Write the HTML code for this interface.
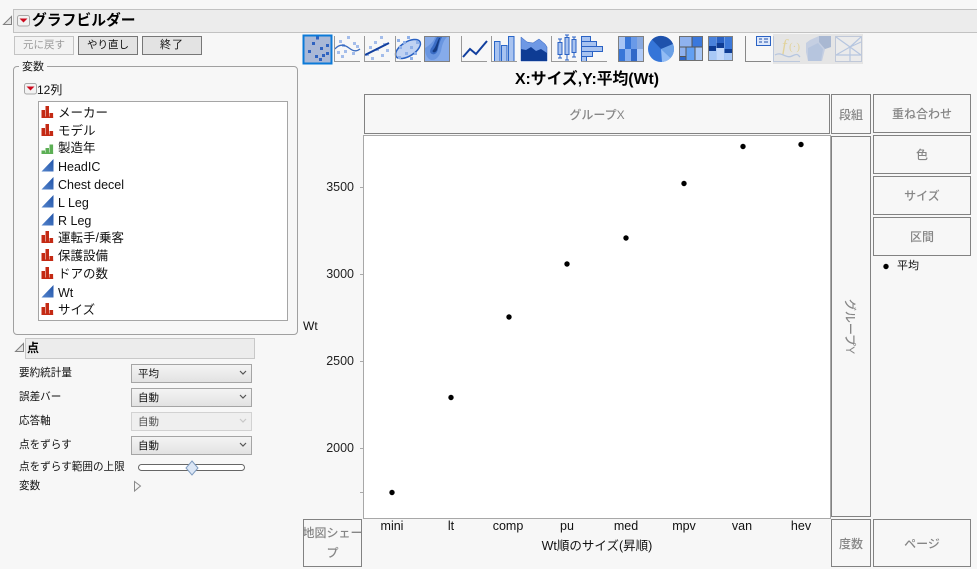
<!DOCTYPE html>
<html lang="ja"><head><meta charset="utf-8"><title>グラフビルダー</title>
<style>
html,body{margin:0;padding:0;background:#f7f7f7;}
body{width:977px;height:569px;overflow:hidden;position:relative;font-family:"Liberation Sans","Noto Sans CJK JP",sans-serif;font-size:12px;color:#111;}
div{box-sizing:border-box;}
.a{position:absolute;white-space:nowrap;}
.z{position:absolute;box-sizing:border-box;border:1px solid #828282;background:#f7f7f7;color:#868686;font-weight:500;display:flex;align-items:center;justify-content:center;text-align:center;font-size:12px;}
.b{position:absolute;box-sizing:border-box;height:19px;top:36px;width:60px;background:#e3e3e3;border:1px solid #777;text-align:center;line-height:17px;font-size:10.5px;}
.row{position:absolute;left:58px;font-size:12.5px;line-height:16px;}
.l{margin-top:1px;}
.dd{position:absolute;left:131px;width:121px;height:19px;box-sizing:border-box;border:1px solid #a5a5a5;background:linear-gradient(#f4f4f4,#e2e2e2);padding-left:6px;font-size:10.5px;line-height:18px;}
.lb{position:absolute;left:19px;font-size:10.600px;line-height:14px;margin-top:1px;}
.t{position:absolute;width:50px;text-align:right;font-size:12.5px;line-height:14px;color:#222;}
.x{position:absolute;top:519px;width:60px;text-align:center;font-size:12.5px;line-height:15px;}
svg{position:absolute;left:0;top:0;}
</style></head><body>

<div class="a" style="left:13px;top:9px;width:964px;height:24px;background:#ececec;border:1px solid #c2c2c2;border-right:none;"></div>
<div class="a" style="left:32px;top:11px;font-size:14.8px;font-weight:bold;line-height:20px;color:#000;">グラフビルダー</div>

<div class="b" style="left:14px;border-color:#c4c4c4;background:#f3f3f3;color:#9a9a9a;">元に戻す</div>
<div class="b" style="left:78px;">やり直し</div>
<div class="b" style="left:142px;font-size:11px;letter-spacing:1px;">終了</div>

<div class="a" style="left:13px;top:66px;width:285px;height:269px;border:1px solid #a0a0a0;border-radius:4px;"></div>
<div class="a" style="left:19px;top:59px;padding:0 3px;background:#f7f7f7;font-size:11px;line-height:16px;">変数</div>
<div class="a" style="left:37px;top:83px;font-size:12px;line-height:15px;">12列</div>

<div class="a" style="left:38px;top:101px;width:250px;height:220px;background:#fff;border:1px solid #a5a5a5;"></div>
<div class="row" style="top:105px;">メーカー</div>
<div class="row" style="top:123px;">モデル</div>
<div class="row" style="top:140px;">製造年</div>
<div class="row l" style="top:158px;">HeadIC</div>
<div class="row l" style="top:176px;">Chest decel</div>
<div class="row l" style="top:194px;">L Leg</div>
<div class="row l" style="top:212px;">R Leg</div>
<div class="row" style="top:230px;">運転手/乗客</div>
<div class="row" style="top:248px;">保護設備</div>
<div class="row" style="top:266px;">ドアの数</div>
<div class="row l" style="top:284px;">Wt</div>
<div class="row" style="top:302px;">サイズ</div>

<div class="a" style="left:25px;top:338px;width:230px;height:21px;background:#ececec;border:1px solid #c8c8c8;"></div>
<div class="a" style="left:27px;top:341px;font-size:12px;font-weight:bold;line-height:15px;color:#000;">点</div>

<div class="lb" style="top:365px;">要約統計量</div>
<div class="lb" style="top:389px;">誤差バー</div>
<div class="lb" style="top:413px;">応答軸</div>
<div class="lb" style="top:437px;">点をずらす</div>
<div class="lb" style="top:459px;">点をずらす範囲の上限</div>
<div class="lb" style="top:478px;">変数</div>
<div class="dd" style="top:364px;">平均</div>
<div class="dd" style="top:388px;">自動</div>
<div class="dd" style="top:412px;border-color:#d2d2d2;background:#efefef;color:#555;">自動</div>
<div class="dd" style="top:436px;">自動</div>

<div class="a" style="left:363px;top:135px;width:468px;height:384px;background:#fff;border:1px solid #a8a8a8;"></div>

<div class="a" style="left:320px;top:71px;width:534px;text-align:center;font-size:15.8px;font-weight:bold;line-height:18px;color:#000;">X:サイズ,Y:平均(Wt)</div>

<div class="z" style="left:364px;top:94px;width:466px;height:40px;">グループX</div>
<div class="z" style="left:831px;top:94px;width:40px;height:40px;">段組</div>
<div class="z" style="left:873px;top:94px;width:98px;height:39px;">重ね合わせ</div>
<div class="z" style="left:873px;top:135px;width:98px;height:39px;">色</div>
<div class="z" style="left:873px;top:176px;width:98px;height:39px;">サイズ</div>
<div class="z" style="left:873px;top:217px;width:98px;height:39px;">区間</div>
<div class="z" style="left:831px;top:136px;width:40px;height:381px;"><span style="display:inline-block;transform:rotate(90deg);white-space:nowrap;">グループY</span></div>
<div class="z" style="left:303px;top:519px;width:59px;height:48px;line-height:20px;display:block;padding-top:3px;overflow:hidden;font-size:12px;"><span style="display:block;margin:0 -4px;white-space:nowrap;">地図シェー</span>プ</div>
<div class="z" style="left:831px;top:519px;width:40px;height:48px;">度数</div>
<div class="z" style="left:873px;top:519px;width:98px;height:48px;">ページ</div>

<div class="a" style="left:897px;top:259px;font-size:11px;line-height:15px;">平均</div>

<div class="t" style="left:304px;top:180px;">3500</div>
<div class="t" style="left:304px;top:267px;">3000</div>
<div class="t" style="left:304px;top:354px;">2500</div>
<div class="t" style="left:304px;top:441px;">2000</div>
<div class="a" style="left:303px;top:319px;font-size:12px;line-height:15px;">Wt</div>

<div class="x" style="left:362px;">mini</div>
<div class="x" style="left:421px;">lt</div>
<div class="x" style="left:478px;">comp</div>
<div class="x" style="left:537px;">pu</div>
<div class="x" style="left:596px;">med</div>
<div class="x" style="left:654px;">mpv</div>
<div class="x" style="left:712px;">van</div>
<div class="x" style="left:771px;">hev</div>
<div class="a" style="left:497px;top:538px;width:200px;text-align:center;font-size:12.5px;line-height:16px;">Wt順のサイズ(昇順)</div>

<svg width="977" height="569" viewBox="0 0 977 569" xmlns="http://www.w3.org/2000/svg">
<defs>
<g id="nom"><path d="M0 12V4h3.500v8zM4 12V0h3.500v12zM8 12V7h3.600v5z" fill="#c42a14"/><path d="M0 10.500h11.600V12H0z" fill="#c42a14"/></g>
<g id="ord"><path d="M0 12V8.500h3.500V12zM4 12V6h3.500v6zM8 12V2.500h3.600V12z" fill="#5caf55"/><path d="M0 10.500h11.600V12H0z" fill="#5caf55"/></g>
<linearGradient id="bl" x1="0" y1="1" x2="1" y2="0"><stop offset="0" stop-color="#5585cc"/><stop offset="1" stop-color="#1f52a8"/></linearGradient>
<g id="con"><path d="M0 12.500L12 0v12.500z" fill="url(#bl)"/></g>
<g id="red"><rect x=".5" y=".5" width="12" height="10.500" rx="2" fill="#f2f2f2" stroke="#a8a8a8"/><path d="M2.500 3.500h8L6.500 7.500z" fill="#cc0a1e"/></g>
<g id="dd"><path d="M0 0l3 3 3-3" fill="none" stroke="#555" stroke-width="1.200"/></g>
</defs>

<!-- disclosure triangles -->
<path d="M3.500 24.500L11.500 16.500V24.500Z" fill="#e4e4e4" stroke="#808080"/>
<path d="M15.500 351.500L23.500 343.500V351.500Z" fill="#e4e4e4" stroke="#808080"/>
<use href="#red" x="17" y="15"/>
<use href="#red" x="24" y="83"/>

<!-- column icons -->
<use href="#nom" x="41.500" y="106"/><use href="#nom" x="41.500" y="124"/>
<use href="#ord" x="41.500" y="142"/>
<use href="#con" x="41.500" y="159"/><use href="#con" x="41.500" y="177"/><use href="#con" x="41.500" y="195"/><use href="#con" x="41.500" y="213"/>
<use href="#nom" x="41.500" y="231"/><use href="#nom" x="41.500" y="249"/><use href="#nom" x="41.500" y="267"/>
<use href="#con" x="41.500" y="285"/>
<use href="#nom" x="41.500" y="303"/>

<!-- dropdown arrows -->
<use href="#dd" x="240" y="371"/><use href="#dd" x="240" y="395"/>
<path d="M240 419l3 3 3-3" fill="none" stroke="#c8c8c8" stroke-width="1.200"/>
<use href="#dd" x="240" y="443"/>

<!-- slider -->
<rect x="138.500" y="464.500" width="106" height="6" rx="3" fill="#fff" stroke="#666"/>
<path d="M192 461L198 468 192 475 186 468Z" fill="#dbe6f5" stroke="#7f9cc0"/>
<path d="M134.500 481.500L140.500 486 134.500 491Z" fill="#f5f5f5" stroke="#8a8a8a"/>

<!-- ticks -->
<path d="M360 187.500h3M360 274.500h3M360 361.500h3M360 448.500h3M360 492.500h3" stroke="#aaa" fill="none"/>

<!-- points -->
<g fill="#000">
<circle cx="392" cy="492.500" r="2.700"/><circle cx="451" cy="397.500" r="2.700"/><circle cx="509" cy="317" r="2.700"/><circle cx="567" cy="264" r="2.700"/><circle cx="626" cy="238" r="2.700"/><circle cx="684" cy="183.500" r="2.700"/><circle cx="743" cy="146.500" r="2.700"/><circle cx="801" cy="144.500" r="2.700"/>
<circle cx="886" cy="266.500" r="2.700"/>
</g>

<!-- icon 1 -->
<rect x="303.500" y="35.500" width="28" height="28" fill="#aab8d6" stroke="#0b7ad8" stroke-width="2"/>
<g fill="#2f62c0">
<rect x="316" y="36.500" width="3" height="3"/><rect x="312" y="42" width="3" height="3"/><rect x="326" y="44" width="3" height="3"/><rect x="320" y="47" width="3" height="3"/><rect x="308" y="50" width="3" height="3"/><rect x="326" y="52" width="3" height="3"/><rect x="322" y="54" width="3" height="3"/><rect x="315" y="55" width="3" height="3"/><rect x="319" y="58" width="3" height="3"/>
</g>
<!-- icon 2 -->
<g fill="#a4bdea">
<rect x="347" y="36" width="3" height="3"/><rect x="339" y="40" width="3" height="3"/><rect x="353" y="42" width="3" height="3"/><rect x="342" y="44" width="3" height="3"/><rect x="356" y="45" width="3" height="3"/><rect x="337" y="51" width="3" height="3"/><rect x="344" y="50" width="3" height="3"/><rect x="352" y="52" width="3" height="3"/><rect x="341" y="55" width="3" height="3"/>
</g>
<path d="M335 49C340 43 345 45 349 48S356 52 360 49" fill="none" stroke="#3a6cc0" stroke-width="1.300"/>
<path d="M334.500 36V61.500H360" fill="none" stroke="#999"/>
<!-- icon 3 -->
<g fill="#a4bdea">
<rect x="380" y="36" width="3" height="3"/><rect x="374" y="41" width="3" height="3"/><rect x="383" y="43" width="3" height="3"/><rect x="369" y="46" width="3" height="3"/><rect x="376" y="48" width="3" height="3"/><rect x="386" y="49" width="3" height="3"/><rect x="366" y="53" width="3" height="3"/><rect x="381" y="54" width="3" height="3"/><rect x="371" y="57" width="3" height="3"/>
</g>
<path d="M365 55L389 43" fill="none" stroke="#123f9e" stroke-width="2"/>
<path d="M364.500 36V61.500H390" fill="none" stroke="#999"/>
<!-- icon 4 -->
<ellipse cx="408" cy="49" rx="14" ry="7" transform="rotate(-32 408 49)" fill="#c0d2f2" stroke="#2a62c4" stroke-width="1.500"/>
<g fill="#8fb0e8">
<rect x="407" y="36" width="3" height="3"/><rect x="397" y="39" width="3" height="3"/><rect x="403" y="41" width="3" height="3"/><rect x="416" y="41" width="3" height="3"/><rect x="399" y="46" width="3" height="3"/><rect x="410" y="46" width="3" height="3"/><rect x="405" y="52" width="3" height="3"/><rect x="414" y="52" width="3" height="3"/><rect x="410" y="57" width="3" height="3"/><rect x="398" y="56" width="3" height="3"/>
</g>
<path d="M395.500 36V61.500H421" fill="none" stroke="#999"/>
<!-- icon 5 -->
<rect x="424.500" y="36.500" width="25" height="25" fill="#86abea" stroke="#808080"/>
<path d="M425 48C430 45 434 41 435 37H447C443 41 442 46 441 51 439 57 436 60 432 60 428 60 425 55 425 48Z" fill="#6a96e0"/>
<path d="M432 47C434 44 435 40 437 37H442C440 41 439 45 438 49 437 54 434 55 432 54 429 53 430 49 432 47Z" fill="#3a6cc4"/>
<path d="M434 49C436 46 437 42 439 38H440C439 42 438 46 437 50 436 52 434 53 433 52 432 51 433 50 434 49Z" fill="#153c84"/>

<!-- icon 6 line -->
<path d="M463 57L470 49 476 54 487 41" fill="none" stroke="#123f9e" stroke-width="2"/>
<path d="M461.500 36V61.500H487" fill="none" stroke="#999"/>
<!-- icon 7 bars -->
<g fill="#a8c3f0" stroke="#2a66c8">
<rect x="494.500" y="41.500" width="5.500" height="20"/><rect x="501.500" y="45.500" width="5.500" height="16"/><rect x="508.500" y="36.500" width="5.500" height="25"/>
</g>
<path d="M491.500 36V61.500H517" fill="none" stroke="#999"/>
<!-- icon 8 area -->
<path d="M521 37L527 42 533 43 539 39 545 44 547 47V61H521Z" fill="#6e98e4" stroke="#2c5ebe" stroke-width=".5"/>
<path d="M521 49L526 50 531 47 536 51 541 49 547 53V61H521Z" fill="#0e3c94"/>
<!-- icon 9 box -->
<g fill="#a8c3f0" stroke="#2a62c4">
<rect x="558" y="42.500" width="4" height="12"/><rect x="565" y="37.500" width="4" height="17"/><rect x="572" y="39.500" width="4" height="13"/>
</g>
<path d="M560 39v3M558 39h4M560 55v3M558 58h4M567 35v3M565 35h4M567 55v5M565 60h4M574 37v3M572 37h4M574 53v4M572 57h4" fill="none" stroke="#2a62c4"/>
<path d="M551.500 36V61.500H577" fill="none" stroke="#999"/>
<!-- icon 10 hist -->
<g fill="#a8c3f0" stroke="#2a62c4">
<rect x="581.500" y="36.500" width="9" height="5"/><rect x="581.500" y="41.500" width="15" height="5"/><rect x="581.500" y="46.500" width="21" height="5"/><rect x="581.500" y="51.500" width="11" height="5"/><rect x="581.500" y="56.500" width="5" height="5"/>
</g>
<path d="M581 61.500H607" fill="none" stroke="#999"/>
<!-- icon 11 mosaic -->
<rect x="618.500" y="36.500" width="25" height="25" fill="#6a97e4" stroke="#808080"/>
<g>
<rect x="619" y="37" width="6" height="12" fill="#a8c5f5"/><rect x="625" y="37" width="6" height="12" fill="#3876d8"/><rect x="631" y="37" width="6" height="12" fill="#6a9ae8"/><rect x="637" y="37" width="6" height="12" fill="#88a9e0"/>
<rect x="619" y="49" width="6" height="12" fill="#3876d8"/><rect x="625" y="49" width="6" height="12" fill="#88b0f0"/><rect x="631" y="49" width="6" height="12" fill="#3168c8"/><rect x="637" y="49" width="6" height="12" fill="#b0cbf8"/>
</g>
<!-- icon 12 pie -->
<circle cx="661" cy="49" r="13" fill="#3575d8"/>
<path d="M661 49L652 39.500A13 13 0 0 1 673 44Z" fill="#1e52ac"/>
<path d="M661 49L673 44A13 13 0 0 1 670.500 58Z" fill="#6aa0e6"/>
<path d="M661 49L670.500 58A13 13 0 0 1 662 62Z" fill="#92bcf4"/>
<!-- icon 13 treemap -->
<rect x="679.500" y="36.500" width="23" height="24" fill="#8fb2ee" stroke="#707070"/>
<rect x="692" y="37" width="10" height="10" fill="#3a78dc"/>
<rect x="686" y="47" width="9" height="13" fill="#62a0f2"/>
<rect x="695" y="47" width="7" height="13" fill="#a8c8f8"/>
<rect x="680" y="57" width="6" height="3" fill="#2e68c8"/>
<path d="M680 47H702M692 37V47M686 47V60M695 47V60M680 56.500H686" fill="none" stroke="#555"/>
<!-- icon 14 stacked mosaic -->
<rect x="708.500" y="36.500" width="24" height="24" fill="#9ec0f2" stroke="#808080"/>
<g>
<rect x="709" y="37" width="7" height="9" fill="#4a82dc"/><rect x="709" y="46" width="7" height="5" fill="#0e3c94"/><rect x="709" y="51" width="7" height="9" fill="#a8c8f6"/>
<rect x="716.500" y="37" width="7.500" height="6" fill="#2a62c4"/><rect x="716.500" y="43" width="7.500" height="5" fill="#0e3c94"/><rect x="716.500" y="48" width="7.500" height="12" fill="#c2d8fa"/>
<rect x="724.500" y="37" width="7.500" height="12" fill="#3c78d8"/><rect x="724.500" y="49" width="7.500" height="4" fill="#0e3c94"/><rect x="724.500" y="53" width="7.500" height="7" fill="#a8c8f6"/>
</g>
<!-- icon 15 -->
<path d="M745.500 36V61.500H771" fill="none" stroke="#888"/>
<rect x="756.500" y="36.500" width="14" height="9" fill="#dde8fb" stroke="#2a62c4"/>
<path d="M759 39h3M759 42h3M764 39h4M764 42h4" stroke="#1f4ea8" fill="none"/>
<!-- disabled block -->
<rect x="773" y="34" width="90" height="30" fill="#e5e5e5"/>
<path d="M773.500 36V61.500H800" fill="none" stroke="#bcc8dc"/>
<text x="782" y="51" font-family="Liberation Serif, serif" font-style="italic" font-size="17" fill="#e2d39c">f</text>
<text x="789" y="50" font-family="Liberation Serif, serif" font-size="11" fill="#e2d39c">(·)</text>
<path d="M775 55C781 51 786 59 792 56S798 55 800 57" fill="none" stroke="#b6c6e0" stroke-width="1.300"/>
<path d="M810 40L819 36H831V47L825 49 822 61H808L806 52V43Z" fill="#c5cfe2"/>
<path d="M819 36H831V47L825 49 819 42Z" fill="#a9b8d2"/>
<path d="M808 48L818 43 823 49 821 61H808Z" fill="#b6c5de"/>
<rect x="835.500" y="36.500" width="26" height="25" fill="#ebebeb" stroke="#c0c8d8"/>
<path d="M836 37L850 47 836 55M861 37L850 47 861 42M850 47L861 55M836 55L861 55M850 47V61" fill="none" stroke="#b6c6e0" stroke-width="1.200"/>
</svg>
</body></html>
